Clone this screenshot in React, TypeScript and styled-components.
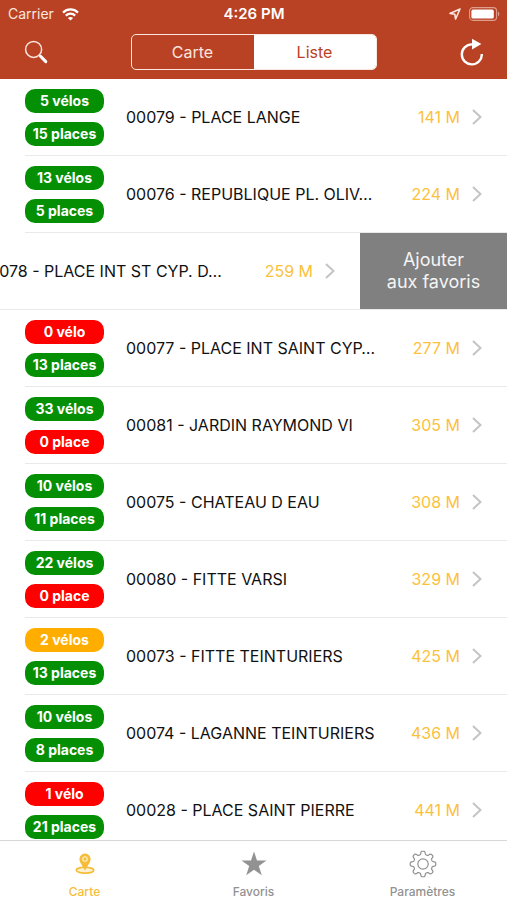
import React, { useState } from "react";
import styled, { createGlobalStyle } from "styled-components";

const colors = {
  brick: "#b94224",
  cream: "#fbe6df",
  amber: "#fcc13c",
  tabAmber: "#f5bd3a",
  green: "#058f05",
  red: "#fe0000",
  orange: "#ffae00",
  grey: "#808080",
  muted: "#929292",
  line: "#e9e9e9",
};

const GlobalStyle = createGlobalStyle`
  *, *::before, *::after { box-sizing: border-box; }
  body {
    margin: 0;
    background: #fff;
    color: #111;
    font-family: Inter, "Liberation Sans", sans-serif;
  }
  button {
    margin: 0;
    padding: 0;
    border: 0;
    background: none;
    color: inherit;
    font: inherit;
    cursor: pointer;
  }
  svg { display: block; }
`;

const Screen = styled.div`
  display: flex;
  flex-direction: column;
  height: 100vh;
  overflow: hidden;
`;

const Header = styled.header`
  flex: none;
  background: ${colors.brick};
  color: ${colors.cream};
`;

const StatusBar = styled.div`
  display: grid;
  grid-template-columns: 1fr auto 1fr;
  align-items: center;
  height: 28px;
  padding: 0 7px 0 8px;
  font-size: 14px;
  line-height: 20px;
`;

const StatusGroup = styled.div<{ $end?: boolean }>`
  display: flex;
  align-items: center;
  justify-content: ${(p) => (p.$end ? "flex-end" : "flex-start")};
  gap: 8px;
`;

const Clock = styled.time`
  font-size: 15px;
  font-weight: 600;
  color: #fff;
`;

const NavBar = styled.nav`
  display: grid;
  grid-template-columns: 1fr minmax(0, 246px) 1fr;
  align-items: center;
  height: 51px;
  padding: 0 24px 3px 24px;
`;

const IconButton = styled.button<{ $end?: boolean }>`
  justify-self: ${(p) => (p.$end ? "end" : "start")};
`;

const Segments = styled.div`
  display: flex;
  height: 36px;
  border: 1px solid ${colors.cream};
  border-radius: 5px;
  overflow: hidden;
`;

const Segment = styled.button<{ $active: boolean }>`
  flex: 1;
  font-size: 16px;
  line-height: 20px;
  background: ${(p) => (p.$active ? "#fff" : "transparent")};
  color: ${(p) => (p.$active ? colors.brick : colors.cream)};
`;

const StationList = styled.ul`
  flex: 1;
  min-height: 0;
  margin: 0;
  padding: 0;
  list-style: none;
  overflow: hidden auto;
  scrollbar-width: none;
`;

const Row = styled.li`
  display: flex;
  justify-content: flex-end;
  height: 77px;
  overflow: hidden;
`;

const RowBody = styled.div`
  flex: none;
  display: flex;
  width: 100%;
  padding-left: 25px;
`;

const RowContent = styled.button`
  flex: 1;
  min-width: 0;
  display: flex;
  align-items: center;
  padding-right: 24px;
  border-bottom: 1px solid ${colors.line};
  text-align: left;
`;

const Badges = styled.span`
  flex: none;
  display: flex;
  flex-direction: column;
  gap: 9px;
  width: 79px;
  margin-right: 22px;
`;

const Badge = styled.span<{ $color: string }>`
  height: 24px;
  border-radius: 10px;
  background: ${(p) => p.$color};
  color: #fff;
  font-size: 14px;
  font-weight: 700;
  line-height: 23px;
  text-align: center;
  white-space: nowrap;
`;

const StationName = styled.span`
  flex: 1;
  min-width: 0;
  overflow: hidden;
  white-space: nowrap;
  font-size: 16px;
  line-height: 20px;
`;

const Distance = styled.span`
  margin-right: 11px;
  color: ${colors.amber};
  font-size: 16px;
  line-height: 20px;
  white-space: nowrap;
`;

const SwipeAction = styled.button`
  flex: none;
  width: 147px;
  border-bottom: 1px solid ${colors.line};
  background: ${colors.grey};
  background-clip: padding-box;
  color: #f4f4f4;
  font-size: 18px;
  line-height: 22px;
`;

const TabBar = styled.nav`
  flex: none;
  display: flex;
  height: 60px;
  border-top: 1px solid #d8d8d8;
  background: #fff;
`;

const Tab = styled.button<{ $active: boolean }>`
  flex: 1;
  display: flex;
  flex-direction: column;
  align-items: center;
  justify-content: flex-end;
  gap: 6px;
  color: ${(p) => (p.$active ? colors.tabAmber : colors.muted)};
  font-size: 12px;
  font-weight: 500;
  line-height: 16px;
`;

const WifiIcon = () => (
  <svg width="17" height="13" viewBox="0 0 17 13" fill="none" stroke="#fff" strokeWidth="2.2" aria-hidden="true">
    <path d="M1 4.6C5.2.4 11.8.4 16 4.6" />
    <path d="M3.8 7.6c2.7-2.6 6.7-2.6 9.4 0" />
    <path d="M8.5 12.6 5.9 9.9c1.5-1.3 3.7-1.3 5.2 0z" fill="#fff" stroke="none" />
  </svg>
);

const LocationIcon = () => (
  <svg width="12" height="12" viewBox="0 0 12 12" fill="none" stroke={colors.cream} strokeWidth="1.6" strokeLinejoin="round" aria-hidden="true">
    <path d="M11 1 1 5.4l4.8.8.8 4.8z" />
  </svg>
);

const BatteryIcon = () => (
  <svg width="31" height="14" viewBox="0 0 31 14" aria-hidden="true">
    <rect x=".6" y=".6" width="27" height="12.8" rx="3.4" fill="none" stroke="#e09e8c" strokeWidth="1.1" />
    <rect x="2.4" y="2.4" width="22.4" height="9.2" rx="1.6" fill="#fff" />
    <path d="M29 4.6c1.8.8 1.8 4 0 4.8z" fill="#e09e8c" />
  </svg>
);

const SearchIcon = () => (
  <svg width="24" height="24" viewBox="0 0 24 24" fill="none" stroke={colors.cream} aria-hidden="true">
    <circle cx="9.6" cy="9.4" r="8" strokeWidth="1.5" />
    <path d="m15.4 15.2 1.6 1.6" strokeWidth="1.6" />
    <path d="m16.6 16.4 5.2 5.2" strokeWidth="3" strokeLinecap="round" stroke="#fff" />
  </svg>
);

const RefreshIcon = () => (
  <svg width="24" height="28" viewBox="-1 0 24 28" aria-hidden="true">
    <path d="M13.4 6.4h-1.6a10 10 0 1 0 10 9.6" fill="none" stroke="#fff" strokeWidth="2.4" />
    <path d="M12 .8 21.4 6 12 11.6z" fill="#fff" />
  </svg>
);

const Chevron = () => (
  <svg width="12" height="16" viewBox="0 0 12 16" fill="none" stroke="#c4c4c4" strokeWidth="2" aria-hidden="true">
    <path d="m2 1 7.5 7L2 15" />
  </svg>
);

const PinIcon = () => (
  <svg width="22" height="22" viewBox="0 0 22 22" aria-hidden="true">
    <ellipse cx="11" cy="17.2" rx="8.8" ry="2.9" fill="#fdf1d2" stroke="currentColor" strokeWidth="1.6" />
    <path d="M11 17.4 6.4 9.8C3.800 5 7 .6 11 .6s7.200 4.400 4.600 9.200z" fill="currentColor" />
    <circle cx="11" cy="6" r="2.200" fill="none" stroke="#fff3cf" strokeWidth="1.100" />
  </svg>
);

const StarIcon = () => (
  <svg width="26" height="26" viewBox="0 0 26 26" fill="currentColor" aria-hidden="true">
    <path d="m13 .5 3 9h9.500l-7.700 5.600 3 9.200L13 18.700l-7.800 5.600 3-9.200L.500 9.500H10z" />
  </svg>
);

/* Outline of a gear with rounded teeth, sampled around its centre. */
const gearPath = (() => {
  const points: string[] = [];
  for (let i = 0; i < 144; i++) {
    const angle = (i / 144) * Math.PI * 2;
    const wave = Math.tanh(2.4 * Math.cos(angle * 8));
    const radius = 11.2 + 1.6 * wave;
    points.push(
      `${(14 + radius * Math.sin(angle)).toFixed(2)} ${(14 - radius * Math.cos(angle)).toFixed(2)}`
    );
  }
  return `M${points.join("L")}Z`;
})();

const GearIcon = () => (
  <svg width="28" height="28" viewBox="0 0 28 28" fill="none" stroke="currentColor" strokeWidth="1.200" strokeLinejoin="round" aria-hidden="true">
    <path d={gearPath} />
    <circle cx="14" cy="14" r="5.200" />
  </svg>
);

type Station = {
  name: string;
  distance: string;
  badges: [string, string][];
  swiped?: boolean;
};

const { green, red, orange } = colors;

const stations: Station[] = [
  { name: "00079 - PLACE LANGE", distance: "141 M", badges: [["5 vélos", green], ["15 places", green]] },
  { name: "00076 - REPUBLIQUE PL. OLIV…", distance: "224 M", badges: [["13 vélos", green], ["5 places", green]] },
  { name: "00078 - PLACE INT ST CYP. D…", distance: "259 M", badges: [], swiped: true },
  { name: "00077 - PLACE INT SAINT CYP…", distance: "277 M", badges: [["0 vélo", red], ["13 places", green]] },
  { name: "00081 - JARDIN RAYMOND VI", distance: "305 M", badges: [["33 vélos", green], ["0 place", red]] },
  { name: "00075 - CHATEAU D EAU", distance: "308 M", badges: [["10 vélos", green], ["11 places", green]] },
  { name: "00080 - FITTE VARSI", distance: "329 M", badges: [["22 vélos", green], ["0 place", red]] },
  { name: "00073 - FITTE TEINTURIERS", distance: "425 M", badges: [["2 vélos", orange], ["13 places", green]] },
  { name: "00074 - LAGANNE TEINTURIERS", distance: "436 M", badges: [["10 vélos", green], ["8 places", green]] },
  { name: "00028 - PLACE SAINT PIERRE", distance: "441 M", badges: [["1 vélo", red], ["21 places", green]] },
];

const tabs = [
  { label: "Carte", Icon: PinIcon },
  { label: "Favoris", Icon: StarIcon },
  { label: "Paramètres", Icon: GearIcon },
];

const TabIcon = styled.span`
  display: flex;
  align-items: center;
  justify-content: center;
  height: 28px;
`;

function StationRow({ station }: { station: Station }) {
  return (
    <Row>
      <RowBody>
        <RowContent type="button">
          <Badges>
            {station.badges.map(([label, color]) => (
              <Badge key={label} $color={color}>{label}</Badge>
            ))}
          </Badges>
          <StationName>{station.name}</StationName>
          <Distance>{station.distance}</Distance>
          <Chevron />
        </RowContent>
      </RowBody>
      {station.swiped && (
        <SwipeAction type="button">
          Ajouter
          <br />
          aux favoris
        </SwipeAction>
      )}
    </Row>
  );
}

export default function App() {
  const [view, setView] = useState("Liste");
  const [tab, setTab] = useState("Carte");

  return (
    <Screen>
      <GlobalStyle />
      <Header>
        <StatusBar>
          <StatusGroup>
            <span>Carrier</span>
            <WifiIcon />
          </StatusGroup>
          <Clock>4:26 PM</Clock>
          <StatusGroup $end>
            <LocationIcon />
            <BatteryIcon />
          </StatusGroup>
        </StatusBar>
        <NavBar>
          <IconButton type="button" aria-label="Rechercher">
            <SearchIcon />
          </IconButton>
          <Segments>
            {["Carte", "Liste"].map((label) => (
              <Segment
                key={label}
                type="button"
                $active={view === label}
                aria-pressed={view === label}
                onClick={() => setView(label)}
              >
                {label}
              </Segment>
            ))}
          </Segments>
          <IconButton type="button" aria-label="Actualiser" $end>
            <RefreshIcon />
          </IconButton>
        </NavBar>
      </Header>
      <StationList>
        {stations.map((station) => (
          <StationRow key={station.name} station={station} />
        ))}
      </StationList>
      <TabBar>
        {tabs.map(({ label, Icon }) => (
          <Tab key={label} type="button" $active={tab === label} onClick={() => setTab(label)}>
            <TabIcon>
              <Icon />
            </TabIcon>
            {label}
          </Tab>
        ))}
      </TabBar>
    </Screen>
  );
}
